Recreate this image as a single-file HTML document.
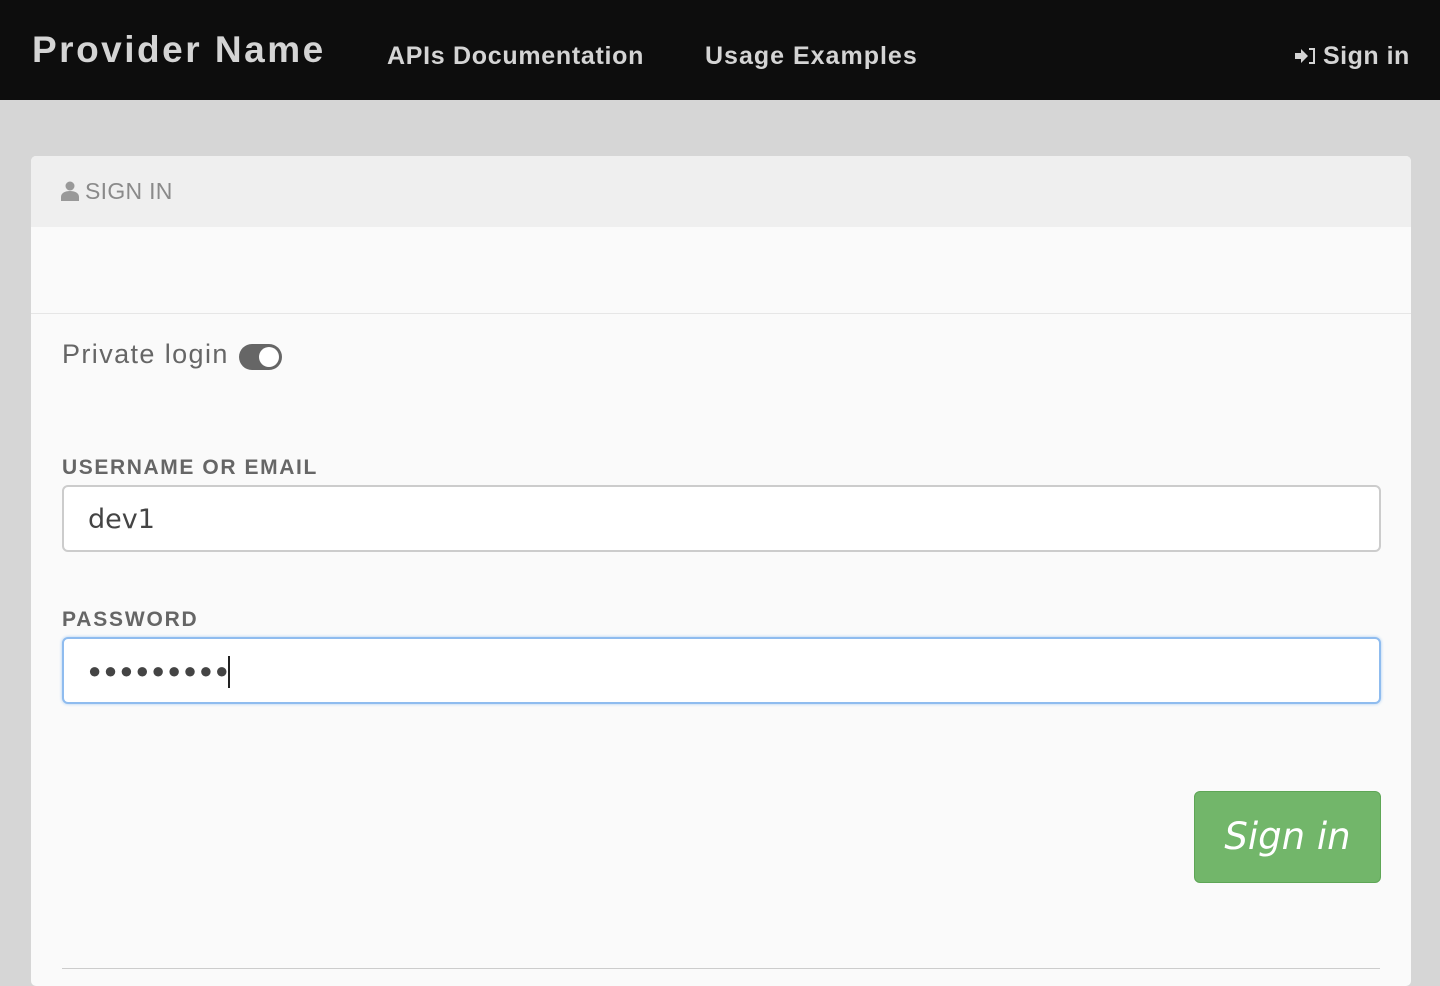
<!DOCTYPE html>
<html><head><style>
body{margin:0;width:1440px;height:970px;overflow:hidden;background:#d6d6d6;font-family:"Liberation Sans",sans-serif;}
.nav{position:absolute;left:0;top:0;width:1440px;height:100px;background:#0d0d0d;color:#d4d4d4;font-weight:bold;}
.nav span{position:absolute;white-space:nowrap;}
.card{position:absolute;left:31px;top:156px;width:1380px;height:830px;background:#fafafa;border-radius:5px;overflow:hidden;}
.hd{height:71px;background:#efefef;color:#8a8a8a;font-size:23px;line-height:71px;padding-left:54px;position:relative;letter-spacing:0.3px;}
.sec{height:86px;border-bottom:1px solid #e6e6e6;}
.lbl{position:absolute;left:31px;color:#666;font-weight:bold;font-size:21px;}
.inp{position:absolute;left:31px;width:1319px;height:67px;border:2px solid #ccc;border-radius:6px;background:#fff;box-sizing:border-box;}
</style></head><body>
<div class="nav">
<span style="left:32px;top:29px;font-size:37px;letter-spacing:2.5px;">Provider Name</span>
<span style="left:387px;top:42px;font-size:25px;letter-spacing:0.7px;">APIs Documentation</span>
<span style="left:705px;top:42px;font-size:25px;letter-spacing:1px;">Usage Examples</span>
<span style="left:1295px;top:42px;font-size:25px;letter-spacing:0.5px;"><svg width="22" height="20" viewBox="0 0 22 20" style="vertical-align:-2px;margin-right:6px"><path d="M0 7h6V3l7 7-7 7v-4H0z" fill="#d4d4d4"/><path d="M14 3h5v14h-5" fill="none" stroke="#d4d4d4" stroke-width="2"/></svg>Sign in</span>
</div>
<div class="card">
<div class="hd"><svg width="18" height="20" viewBox="0 0 18 20" style="position:absolute;left:30px;top:25px"><circle cx="9" cy="5" r="4.5" fill="#999"/><path d="M0 20v-4c0-4 4-6 9-6s9 2 9 6v4z" fill="#999"/></svg>SIGN IN</div>
<div class="sec"></div>
<div style="position:absolute;left:31px;top:183px;font-size:27px;color:#666;letter-spacing:1.4px;">Private login</div>
<div style="position:absolute;left:208px;top:188px;width:43px;height:26px;background:#666;border-radius:13px;"><div style="position:absolute;right:3px;top:3px;width:20px;height:20px;border-radius:50%;background:#fff;"></div></div>
<div class="lbl" style="top:300px;letter-spacing:1.6px;">USERNAME OR EMAIL</div>
<div class="inp" style="top:329px;"><span style="position:absolute;left:24px;top:17px;font-size:27px;color:#444;font-family:'DejaVu Sans',sans-serif;">dev1</span></div>
<div class="lbl" style="top:452px;letter-spacing:1.8px;">PASSWORD</div>
<div class="inp" style="top:481px;border-color:#8fbcef;box-shadow:0 0 3px #a9cdf3;"><span style="position:absolute;left:24px;top:19px;font-size:22px;color:#444;letter-spacing:2.6px;">●●●●●●●●●</span><span style="position:absolute;left:164px;top:17px;width:2px;height:32px;background:#222;"></span></div>
<div style="position:absolute;left:1163px;top:635px;width:185px;height:90px;background:#72b66a;border:1px solid #5ea656;border-radius:6px;color:#fff;font-size:37px;font-style:italic;text-align:center;line-height:90px;font-family:'DejaVu Sans',sans-serif;">Sign in</div>
<div style="position:absolute;left:31px;top:812px;width:1318px;height:1px;background:#ccc;"></div>
</div>
</body></html>
